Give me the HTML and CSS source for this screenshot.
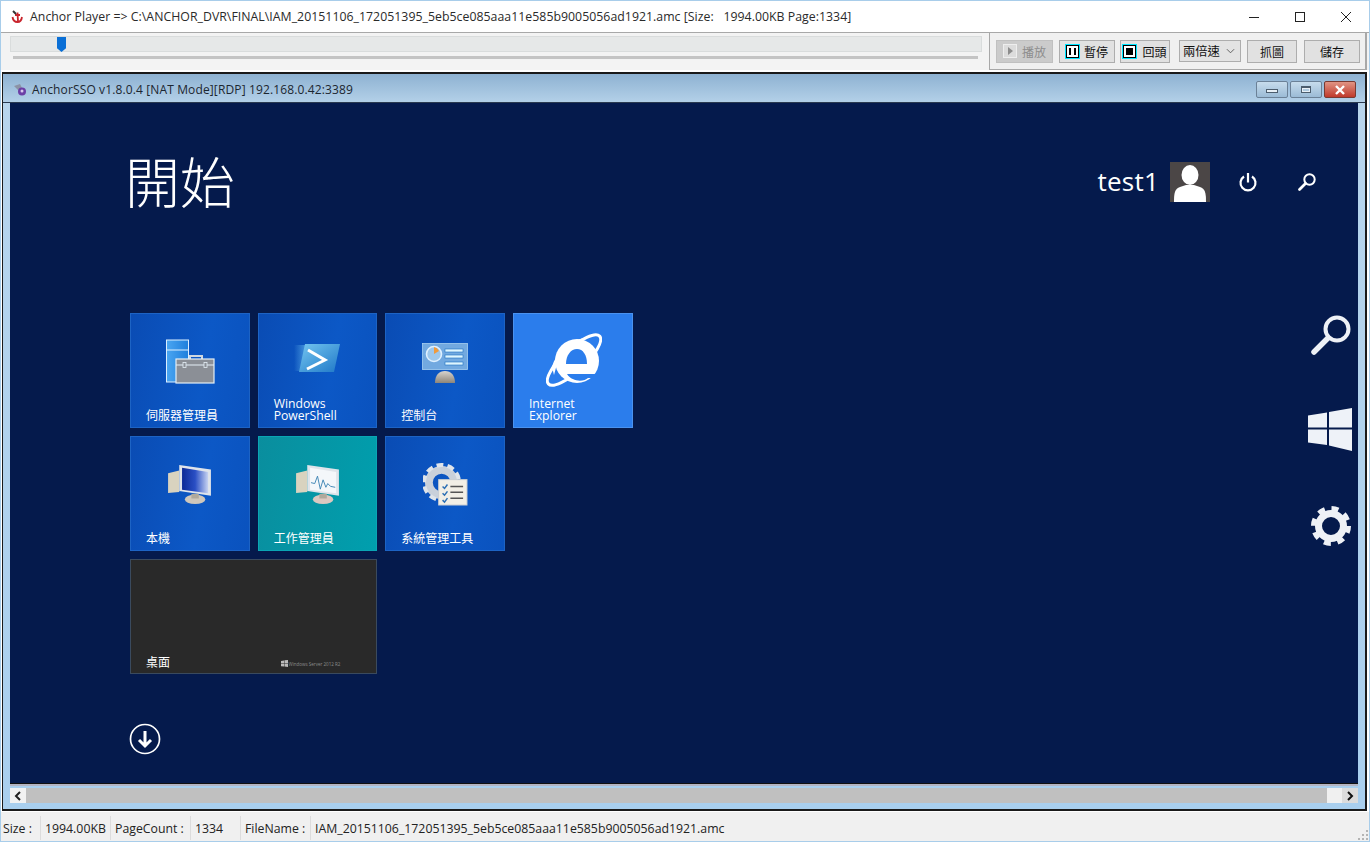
FILE: index.html
```html
<!DOCTYPE html>
<html lang="zh-Hant">
<head>
<meta charset="utf-8">
<title>Anchor Player</title>
<link rel="stylesheet" href="styles.css">
</head>
<body>
<div class="app">
  <header class="titlebar">
    <svg class="app-icon" viewBox="0 0 12 13" width="12" height="13"><path d="M6.500 2.500L7 11.500M4 5h5M1.500 7C2 10.500 4.500 12 6.500 12S10.500 10.500 11 7" fill="none" stroke="#c8242c" stroke-width="1.800"/><path d="M2 1l3 3" stroke="#333" stroke-width="2"/></svg>
    <span class="title-text">Anchor Player =&gt; C:\ANCHOR_DVR\FINAL\IAM_20151106_172051395_5eb5ce085aaa11e585b9005056ad1921.amc [Size:&nbsp;&nbsp; 1994.00KB Page:1334]</span>
    <div class="win-controls">
      <span class="win-btn"><svg viewBox="0 0 10 10" width="10" height="10"><path d="M0 5.500h10" stroke="#222" fill="none"/></svg></span>
      <span class="win-btn"><svg viewBox="0 0 10 10" width="10" height="10"><rect x=".5" y=".5" width="9" height="9" stroke="#222" fill="none"/></svg></span>
      <span class="win-btn"><svg viewBox="0 0 10 10" width="10" height="10"><path d="M0 0l10 10M10 0L0 10" stroke="#222" fill="none"/></svg></span>
    </div>
  </header>

  <section class="toolbar">
    <div class="seek">
      <div class="seek-box"><span class="seek-thumb"></span></div>
      <div class="seek-track"></div>
    </div>
    <div class="controls">
      <button class="btn btn-play disabled"><svg viewBox="0 0 14 14" width="14" height="14"><rect x=".5" y=".5" width="13" height="13" fill="#dcdcdc" stroke="#eee"/><path d="M5 3l5 4-5 4z" fill="#8c8c8c"/></svg>播放</button>
      <button class="btn btn-pause"><span class="media-ico"><span class="bars"></span></span>暫停</button>
      <button class="btn btn-stop"><span class="media-ico"><span class="square"></span></span>回頭</button>
      <div class="speed"><span>兩倍速</span><svg viewBox="0 0 10 6" width="9" height="6"><path d="M1 1l4 4 4-4" fill="none" stroke="#555"/></svg></div>
      <button class="btn btn-grab">抓圖</button>
      <button class="btn btn-save">儲存</button>
    </div>
  </section>

  <section class="rdp">
    <div class="rdp-title">
      <svg class="rdp-icon" viewBox="0 0 14 13" width="14" height="13"><path d="M1 3l6-2 2 4-4 2z" fill="#8b93a6"/><circle cx="9" cy="8.500" r="4" fill="#6c3fa6"/><circle cx="9" cy="8" r="1.500" fill="#d8c8ee"/></svg>
      <span>AnchorSSO v1.8.0.4 [NAT Mode][RDP] 192.168.0.42:3389</span>
      <div class="rdp-controls">
        <span class="cap-btn"><i class="cap-min"></i></span>
        <span class="cap-btn"><i class="cap-max"></i></span>
        <span class="cap-btn cap-close"><svg viewBox="0 0 12 10" width="12" height="10"><path d="M2 1l8 8M10 1L2 9" stroke="#fff" stroke-width="2.400" fill="none"/></svg></span>
      </div>
    </div>

    <div class="screen">
      <div class="start-head">
        <h1 class="start-title">開始</h1>
        <div class="user">
          <span class="user-name">test1</span>
          <span class="avatar"><svg viewBox="0 0 40 40" width="40" height="40"><ellipse cx="20" cy="13" rx="8.500" ry="10" fill="#fff"/><path d="M4 40c0-10 1-13 6-15l6-2h8l6 2c5 2 6 5 6 15z" fill="#fff"/></svg></span>
          <svg class="power" viewBox="0 0 20 20" width="20" height="20"><path d="M6 4.500a7.500 7.500 0 1 0 8 0" fill="none" stroke="#fff" stroke-width="2.200"/><path d="M10 1v9.500" stroke="#fff" stroke-width="2.200"/></svg>
          <svg class="find" viewBox="0 0 20 20" width="20" height="20"><circle cx="12.500" cy="7.500" r="5.200" fill="none" stroke="#fff" stroke-width="2"/><path d="M8.500 11.500L2.500 17.500" stroke="#fff" stroke-width="2.800" stroke-linecap="round"/></svg>
        </div>
      </div>

      <div class="start-body">
        <div class="tiles">
          <div class="tile">
            <div class="tile-icon">
              <svg viewBox="0 0 50 46" width="50" height="46"><defs><linearGradient id="srv" x1="0" x2="1"><stop offset="0" stop-color="#4aa6f2"/><stop offset="1" stop-color="#1f7fdc"/></linearGradient></defs><rect x="1.500" y="1" width="22" height="42" fill="url(#srv)" stroke="#dcefff"/><path d="M1.500 11h22" stroke="#dcefff"/><path d="M25 21v-4h12v4" fill="none" stroke="#cfd8e0" stroke-width="2"/><rect x="11" y="20" width="38" height="24" fill="#8b8f96" stroke="#e4eef6" stroke-width="1.200"/><path d="M11 26h38" stroke="#e4eef6"/><rect x="18" y="23.500" width="3" height="5" fill="#8b8f96" stroke="#e4eef6" stroke-width=".8"/><rect x="39" y="23.500" width="3" height="5" fill="#8b8f96" stroke="#e4eef6" stroke-width=".8"/></svg>
            </div>
            <div class="tile-label cjk">伺服器管理員</div>
          </div>
          <div class="tile">
            <div class="tile-icon icon-ps">
              <svg viewBox="0 0 46 32" width="46" height="32"><defs><linearGradient id="ps" x1="0" y1="0" x2="1" y2="1"><stop offset="0" stop-color="#74c6f0"/><stop offset="1" stop-color="#1f78c8"/></linearGradient><linearGradient id="psb" x1="0" x2="1"><stop offset="0" stop-color="#6cc0ee" stop-opacity="0"/><stop offset="1" stop-color="#6cc0ee" stop-opacity=".7"/></linearGradient></defs><path d="M0 3h14v26H0z" fill="url(#psb)"/><path d="M11 2h35l-6 28H5z" fill="url(#ps)"/><path d="M14 8l17 10-18 9" fill="none" stroke="#fff" stroke-width="3"/></svg>
            </div>
            <div class="tile-label latin">Windows<br>PowerShell</div>
          </div>
          <div class="tile">
            <div class="tile-icon icon-cp">
              <svg viewBox="0 0 46 40" width="46" height="40"><defs><linearGradient id="dome" x1="0" x2="0" y1="0" y2="1"><stop offset="0" stop-color="#d8d4ce"/><stop offset="1" stop-color="#8e8578"/></linearGradient></defs><rect x=".5" y=".5" width="45" height="26" fill="#72a9e0" stroke="#a9d0f0" stroke-width=".8"/><circle cx="12" cy="11" r="7.500" fill="#9ec8ec" stroke="#dff0ff" stroke-width="1.600"/><path d="M12 4a7 7 0 0 1 5 4l-5 3z" fill="#f09a3c"/><rect x="23" y="6" width="18" height="3" fill="#dff6ff" stroke="#1d6fc0" stroke-width=".6"/><rect x="23" y="12" width="18" height="3" fill="#dff6ff" stroke="#1d6fc0" stroke-width=".6"/><rect x="23" y="19" width="18" height="3" fill="#dff6ff" stroke="#1d6fc0" stroke-width=".6"/><path d="M13 40c0-8 4-12 10-12s10 4 10 12z" fill="url(#dome)"/></svg>
            </div>
            <div class="tile-label cjk">控制台</div>
          </div>
          <div class="tile tile-ie">
            <div class="tile-icon icon-ie">
              <svg viewBox="0 0 56 56" width="56" height="56"><ellipse cx="28" cy="27" rx="35" ry="11" transform="rotate(-43 28 27)" fill="none" stroke="#fff" stroke-width="3"/><path d="M6 34C10 20 22 8 38 5C22 12 12 24 8 42z" fill="#fff"/><circle cx="31" cy="28" r="22" fill="#fff"/><path d="M20 31C20 22 25 16 31 16S41 22 41 31z" fill="#2b7dec"/><path d="M21 41H58V45H42C38 49 26 49 21 41z" fill="#2b7dec"/></svg>
            </div>
            <div class="tile-label latin">Internet<br>Explorer</div>
          </div>

          <div class="tile">
            <div class="tile-icon icon-pc">
              <svg viewBox="0 0 48 44" width="45" height="41"><defs><linearGradient id="scr" x1="0" x2="1"><stop offset="0" stop-color="#0c2a96"/><stop offset=".5" stop-color="#2a4fc4"/><stop offset="1" stop-color="#c7d3f1"/></linearGradient></defs><path d="M1 10l12-3v23L1 31z" fill="#d9d3bf"/><path d="M13 1l34 5v28l-34-5z" fill="#dfe4ea"/><path d="M16 4l28 4.500v23l-28-4z" fill="url(#scr)"/><ellipse cx="30" cy="38" rx="11" ry="5" fill="#cfc7bb"/><path d="M26 32h8v5h-8z" fill="#b0a99c"/></svg>
            </div>
            <div class="tile-label cjk">本機</div>
          </div>
          <div class="tile tile-teal">
            <div class="tile-icon icon-pc">
              <svg viewBox="0 0 48 44" width="45" height="41"><path d="M1 10l12-3v23L1 31z" fill="#d9d3bf"/><path d="M13 1l34 5v28l-34-5z" fill="#dfe4ea"/><path d="M16 4l28 4.500v23l-28-4z" fill="#f4f7fa"/><path d="M17 20l4 1 3-8 3 14 3-10 3 8 2-4 3 3 5 1" fill="none" stroke="#3d84b4"/><ellipse cx="30" cy="38" rx="11" ry="5" fill="#dcc8c0"/><path d="M26 32h8v5h-8z" fill="#b0a99c"/></svg>
            </div>
            <div class="tile-label cjk">工作管理員</div>
          </div>
          <div class="tile">
            <div class="tile-icon icon-adm">
              <svg viewBox="0 0 46 44" width="45" height="43"><circle cx="19" cy="20" r="13" fill="none" stroke="#c9d0da" stroke-width="8"/><circle cx="19" cy="20" r="18" fill="none" stroke="#dfe4ea" stroke-width="4" stroke-dasharray="7 4.300"/><rect x="16" y="17" width="29" height="26" fill="#f2efe6" stroke="#c7ccd2"/><path d="M20 24l2 2 3-4M20 31l2 2 3-4M20 38l2 2 3-4" fill="none" stroke="#2c6fb4" stroke-width="1.500"/><path d="M28 24h13M28 30h13M28 36h13" stroke="#555" stroke-width="1.500"/></svg>
            </div>
            <div class="tile-label cjk">系統管理工具</div>
          </div>
          <div class="tile-spacer"></div>

          <div class="tile tile-desktop">
            <div class="tile-label cjk desk-label">桌面</div>
            <div class="desk-brand">
              <svg viewBox="0 0 8 8" width="7" height="7"><path d="M0 1l3.500-.5V3.700H0zM4 .4L8 0v3.700H4zM0 4.200h3.500v3.200L0 7zM4 4.200h4V8l-4-.5z" fill="#bbb"/></svg>
              <span>Windows Server 2012 R2</span>
            </div>
          </div>
        </div>
        <div class="charms">
          <svg viewBox="0 0 44 44" width="44" height="44"><circle cx="29" cy="16" r="11.500" fill="none" stroke="#eef1f6" stroke-width="4"/><path d="M20 25L6 39" stroke="#eef1f6" stroke-width="5.500" stroke-linecap="round"/></svg>
          <svg viewBox="0 0 44 44" width="44" height="44"><path d="M0 8.500L19 5.500V20.500H0zM21 5L44 1V20.500H21zM0 22.500H19V38L0 35.500zM21 22.500H44V44L21 38.500z" fill="#eef2f8"/></svg>
          <svg class="charm-gear" viewBox="0 0 44 44" width="44" height="44"><circle cx="23" cy="22" r="12.500" fill="none" stroke="#eef1f6" stroke-width="7"/><circle cx="23" cy="22" r="17.500" fill="none" stroke="#eef1f6" stroke-width="5" stroke-dasharray="7 6.740"/></svg>
        </div>
      </div>
      <svg class="down" viewBox="0 0 32 32" width="32" height="32"><circle cx="16" cy="16" r="14.500" fill="none" stroke="#fff" stroke-width="1.700"/><path d="M16 8v15M10 17l6 6 6-6" fill="none" stroke="#fff" stroke-width="3"/></svg>
    </div>

    <div class="screen-edge"></div>
    <div class="hscroll">
      <span class="sb-btn"><svg viewBox="0 0 8 10" width="8" height="10"><path d="M6 1L2 5l4 4" fill="none" stroke="#222" stroke-width="2"/></svg></span>
      <span class="sb-trough"></span>
      <span class="sb-rest"></span>
      <span class="sb-btn sb-right"><svg viewBox="0 0 8 10" width="8" height="10"><path d="M2 1l4 4-4 4" fill="none" stroke="#111" stroke-width="2"/></svg></span>
    </div>
  </section>

  <footer class="status">
    <span class="cell c-size">Size :</span>
    <span class="cell c-sizev">1994.00KB</span>
    <span class="cell c-pc">PageCount :</span>
    <span class="cell c-pcv">1334</span>
    <span class="cell c-fn">FileName :</span>
    <span class="cell c-fnv">IAM_20151106_172051395_5eb5ce085aaa11e585b9005056ad1921.amc</span>
    <svg class="grip" viewBox="0 0 10 10" width="10" height="10"><path d="M8 0h2v2H8zM4 4h2v2H4zM8 4h2v2H8zM0 8h2v2H0zM4 8h2v2H4zM8 8h2v2H8z" fill="#b4b4b4"/></svg>
  </footer>
</div>
</body>
</html>
```
FILE: styles.css
```css
* { box-sizing: border-box; }
html, body { margin: 0; padding: 0; }
body {
  width: 1370px;
  height: 842px;
  overflow: hidden;
  font-family: "Open Sans", "Noto Sans CJK TC", sans-serif;
  font-size: 12px;
  color: #222;
  background: #fff;
}
.app {
  width: 1370px;
  height: 842px;
  border: 1px solid #a8cdea;
  display: flex;
  flex-direction: column;
  background: #fff;
}

/* title bar */
.titlebar {
  height: 31px;
  flex: none;
  display: flex;
  align-items: center;
  padding-left: 10px;
  background: #fff;
}
.app-icon { margin-right: 7px; flex: none; }
.title-text { font-size: 12.3px; letter-spacing: 0.03px; white-space: nowrap; color: #2a2a2a; margin-top: -1px; }
.win-controls { margin-left: auto; display: flex; }
.win-btn { width: 46px; height: 31px; display: flex; align-items: center; justify-content: center; }

/* toolbar */
.toolbar {
  height: 38px;
  flex: none;
  display: flex;
  background: #f3f3f3;
  border-top: 1px solid #a8a8a8;
}
.seek { width: 988px; flex: none; padding: 3px 7px 0 9px; position: relative; }
.seek-box { height: 16px; background: #e6e8e8; border: 1px solid #d9dcdc; }
.seek-track { height: 3px; margin: 4px 4px 0 3px; background: #c4c4c4; }
.seek-thumb {
  position: absolute;
  left: 56px;
  top: 4px;
  width: 9px;
  height: 15px;
  background: #0a6fd6;
  clip-path: polygon(0 0, 100% 0, 100% 75%, 50% 100%, 0 75%);
}
.controls {
  flex: 1;
  display: flex;
  align-items: center;
  padding-left: 6px;
  border: 1px solid #a8a8a8;
  border-top: 0;
  border-right-width: 2px;
  margin-right: 2px;
  height: 37px;
  background: #f0f0f0;
}
.btn {
  height: 23px;
  padding: 0;
  display: flex;
  align-items: center;
  justify-content: center;
  gap: 5px;
  font-family: "Noto Sans CJK TC", sans-serif;
  font-size: 12px;
  color: #111;
  background: #e1e1e1;
  border: 1px solid #adadad;
}
.btn.disabled { background: #cbcbcb; border-color: #c0c0c0; color: #8d8d8d; }
.btn-play { width: 57px; }
.btn-pause { width: 56px; margin-left: 6px; }
.btn-stop { width: 50px; margin-left: 5px; gap: 6px; }
.btn-grab { width: 50px; margin-left: 6px; }
.btn-save { width: 56px; margin-left: 7px; }
.media-ico {
  width: 13px;
  height: 13px;
  flex: none;
  display: flex;
  align-items: center;
  justify-content: center;
  background: #fff;
  border: 1px solid #000;
  box-shadow: 0 0 0 1px #00e5ff;
}
.bars { width: 7px; height: 7px; border-left: 2px solid #000; border-right: 2px solid #000; }
.square { width: 7px; height: 7px; background: #000; }
.speed {
  width: 62px;
  height: 22px;
  margin-left: 9px;
  padding: 0 5px 0 3px;
  display: flex;
  align-items: center;
  justify-content: space-between;
  font-family: "Noto Sans CJK TC", sans-serif;
  font-size: 12.300px;
  color: #111;
  background: #e3e3e3;
  border: 1px solid #adadad;
}

/* remote window */
.rdp {
  flex: none;
  height: 739px;
  width: 1365px;
  margin: 2px 0 0 1px;
  padding: 0 7px;
  display: flex;
  flex-direction: column;
  border: 2px solid #1a1a1a;
  border-left-width: 1px;
  border-top-width: 2px;
  background: linear-gradient(#b8d5ec, #a9cfee);
}
.rdp-title {
  height: 29px;
  flex: none;
  margin: 0 -7px;
  padding: 3px 9px 0 8px;
  display: flex;
  align-items: center;
  gap: 5px;
  font-size: 12px;
  letter-spacing: 0.13px;
  color: #1c2630;
  background: linear-gradient(#8eb2d2, #b3d0e8);
  border-bottom: 1px solid #2a3a50;
}
.rdp-icon { flex: none; margin-left: 2px; }
.rdp-controls { margin-left: auto; display: flex; gap: 2px; }
.cap-btn {
  width: 32px;
  height: 17px;
  display: flex;
  align-items: center;
  justify-content: center;
  background: linear-gradient(#c7dcec, #9bbbd6);
  border: 1px solid #6b8197;
  border-radius: 2px;
}
.cap-min { width: 12px; height: 4px; background: #e8f0f6; border: 1px solid #4c5d6d; margin-top: 3px; }
.cap-max { width: 10px; height: 7px; background: transparent; border: 1px solid #4c5d6d; border-top-width: 2px; box-shadow: inset 0 0 0 1px #e8f0f6; }
.cap-close { background: linear-gradient(#e09484, #c0392b); border-color: #7a3a32; }

.screen {
  height: 680px;
  flex: none;
  padding: 48px 6px 0 120px;
  color: #fff;
  background: #051a4c;
}
.start-head {
  height: 62px;
  display: flex;
  align-items: center;
  justify-content: space-between;
  padding-right: 35px;
}
.start-title {
  margin: 0 0 6px -5px;
  font-family: "Noto Sans CJK TC", sans-serif;
  font-size: 55px;
  font-weight: 300;
  line-height: 62px;
}
.user { display: flex; align-items: center; }
.user-name { font-size: 26px; font-weight: 400; margin: 0 11px 2px 0; letter-spacing: .2px; }
.avatar { width: 40px; height: 40px; background: #4b4646; overflow: hidden; display: block; }
.power { margin-left: 28px; }
.find { margin-left: 39px; }

.start-body {
  margin-top: 100px;
  display: flex;
  justify-content: space-between;
  align-items: flex-start;
}
.tiles {
  display: grid;
  grid-template-columns: repeat(4, 119.67px);
  grid-auto-rows: 115px;
  gap: 8px;
}
.tile {
  padding-left: 15px;
  display: flex;
  flex-direction: column;
  color: #fff;
  background: linear-gradient(100deg, #0a4cb4, #0c58c6 60%, #0a52be);
  border: 1px solid #1d63c4;
  overflow: hidden;
}
.tile-ie { background: #2b7dec; border-color: #4a92ef; }
.tile-teal { background: linear-gradient(100deg, #0a8e9e, #009fae); border-color: #0aa5b4; }
.tile-desktop {
  grid-column: span 2;
  background: #292929;
  border-color: #3a4a5e;
  flex-direction: row;
  align-items: flex-end;
  justify-content: space-between;
  padding-bottom: 4px;
  padding-right: 36px;
}
.tile-icon {
  flex: 0 0 91px;
  margin-left: -15px;
  display: flex;
  align-items: center;
  justify-content: center;
  padding-top: 4px;
}
.icon-ps { padding-bottom: 8px; padding-right: 0; }
.icon-cp { padding-bottom: 0; padding-top: 6px; }
.icon-ie { padding-top: 2px; padding-left: 2px; }
.icon-pc { padding-top: 4px; }
.icon-adm { padding-top: 4px; }
.tile-label { flex: 1; }
.cjk { display: block; padding-top: 3px; font-family: "Noto Sans CJK TC", sans-serif; font-size: 12px; line-height: 14px; }
.latin { display: block; margin-top: -7px; font-size: 12.200px; line-height: 12px; }
.desk-label { flex: none; padding: 0; }
.desk-brand { display: flex; align-items: center; gap: 1px; color: #8d8d8d; font-size: 4.500px; padding-bottom: 2px; }
.charms { display: flex; flex-direction: column; gap: 50px; }
.charm-gear { margin-top: 3px; }
.down { display: block; margin: 49px 0 0 -1px; }

/* scrollbar */
.screen-edge {
  height: 3px;
  flex: none;
  background: #b4b4c2;
  border-top: 1px solid #111;
}
.hscroll {
  height: 15px;
  flex: none;
  margin-top: 2px;
  display: flex;
}
.sb-btn { width: 16px; display: flex; align-items: center; justify-content: center; background: #f2f2f2; }
.sb-trough { flex: 1; background: #c0c0c0; }
.sb-rest { width: 15px; background: #f0f0f0; }
.sb-right { background: #dcdcdc; }

/* status bar */
.status {
  flex: 1;
  margin-top: 1px;
  padding: 4px 0 1px;
  position: relative;
  display: flex;
  align-items: stretch;
  background: #f0f0f0;
  font-size: 12.300px;
  color: #222;
}
.cell { display: flex; align-items: center; padding-left: 4px; border-left: 1px solid #dcdcdc; white-space: nowrap; }
.c-size { width: 39px; border-left: 0; padding-left: 2px; }
.c-sizev { width: 70px; }
.c-pc { width: 80px; }
.c-pcv { width: 50px; }
.c-fn { width: 70px; }
.grip { position: absolute; right: 1px; bottom: 1px; }
```
